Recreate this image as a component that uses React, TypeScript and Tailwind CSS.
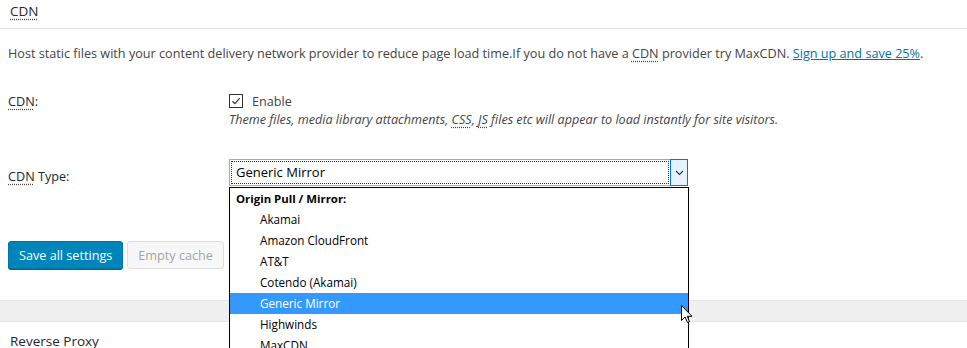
import React from "react";

const Abbr = ({ children }: { children: React.ReactNode }) => (
  <span className="underline decoration-dotted decoration-[#444] underline-offset-[3px]">{children}</span>
);

const items = [
  "Akamai",
  "Amazon CloudFront",
  "AT&T",
  "Cotendo (Akamai)",
  "Generic Mirror",
  "Highwinds",
  "MaxCDN",
];

export default function App() {
  return (
    <div
      className="relative w-[967px] h-[348px] overflow-hidden bg-white text-[#444] text-[12.65px]"
      style={{ fontFamily: '"Open Sans", "Noto Sans", sans-serif' }}
    >
      <div className="h-[29px] border-b border-[#e5e5e5] pl-[10px] flex items-center">
        <span className="text-[13.5px] text-[#23282d] leading-none pb-[4px]">
          <Abbr>CDN</Abbr>
        </span>
      </div>

      <p className="mt-[14px] pl-[8px] leading-[20px] whitespace-nowrap">
        Host static files with your content delivery network provider to reduce page load time.If you do not have a{" "}
        <Abbr>CDN</Abbr> provider try MaxCDN.{" "}
        <a className="text-[#0073aa] underline">Sign up and save 25%</a>.
      </p>

      <div className="mt-[28px] flex pl-[8px]">
        <div className="w-[221px] leading-[20px] text-[#23282d]">
          <Abbr>CDN</Abbr>:
        </div>
        <div>
          <div className="flex items-center h-[20px]">
            <span className="w-[14px] h-[14px] border border-[#333] flex items-center justify-center">
              <svg width="10" height="10" viewBox="0 0 10 10">
                <path d="M1.5 5.2 L4 7.6 L8.7 2.2" fill="none" stroke="#333" strokeWidth="1.2" />
              </svg>
            </span>
            <span className="ml-[9px]">Enable</span>
          </div>
          <div className="italic text-[12.6px] leading-[18px] text-[#444]">
            Theme files, media library attachments, <Abbr>CSS</Abbr>, <Abbr>JS</Abbr> files etc will appear to load instantly for site visitors.
          </div>
        </div>
      </div>

      <div className="mt-[30px] flex pl-[8px]">
        <div className="w-[221px] pt-[7px] leading-[20px] text-[#23282d]">
          <Abbr>CDN</Abbr> Type:
        </div>
        <div className="w-[459px] h-[27px] border border-[#7eb4ea] flex bg-white">
          <div className="flex-1 m-[1px] border border-dotted border-[#333] flex items-center pl-[4px] text-black text-[13px] leading-none">
            Generic Mirror
          </div>
          <div className="w-[18px] -my-px -mr-px border border-[#0078d7] bg-[#e5f1fb] flex items-center justify-center">
            <svg width="9" height="6" viewBox="0 0 9 6">
              <path d="M1 1 L4.5 4.5 L8 1" fill="none" stroke="#333" strokeWidth="1.1" />
            </svg>
          </div>
        </div>
      </div>

      <div className="mt-[55px] flex pl-[8px] gap-[4px]">
        <button className="h-[28px] px-[10px] bg-[#0085ba] border border-[#0073aa] rounded-[3px] text-white leading-none shadow-[0_1px_0_#006799]">
          Save all settings
        </button>
        <button className="h-[28px] px-[10px] bg-[#f7f7f7] border border-[#ddd] rounded-[3px] text-[#a0a5aa] leading-none">
          Empty cache
        </button>
      </div>

      <div className="mt-[31px] h-[22px] bg-[#f0f0f0] border-y border-[#e5e5e5]" />

      <div className="pl-[10px] pt-[9px] text-[13.5px] text-[#23282d] leading-[20px]">Reverse Proxy</div>

      <div className="absolute left-[229px] top-[187px] w-[460px] bg-white border border-black text-black text-[11.7px]">
        <div className="h-[21px] flex items-center pl-[6px] font-bold text-[11.4px]">Origin Pull / Mirror:</div>
        {items.map((it) => (
          <div
            key={it}
            className={
              it === "Generic Mirror"
                ? "h-[21px] flex items-center pl-[30px] bg-[#3399ff] text-white"
                : "h-[21px] flex items-center pl-[30px]"
            }
          >
            {it}
          </div>
        ))}
      </div>

      <svg className="absolute left-[681px] top-[305px]" width="12" height="19" viewBox="0 0 12 19">
        <path d="M0.5 0.5 L0.5 15.5 L4 12 L6.5 17.5 L8.5 16.6 L6.2 11.3 L11 11.3 Z" fill="white" stroke="black" strokeWidth="1" />
      </svg>
    </div>
  );
}
